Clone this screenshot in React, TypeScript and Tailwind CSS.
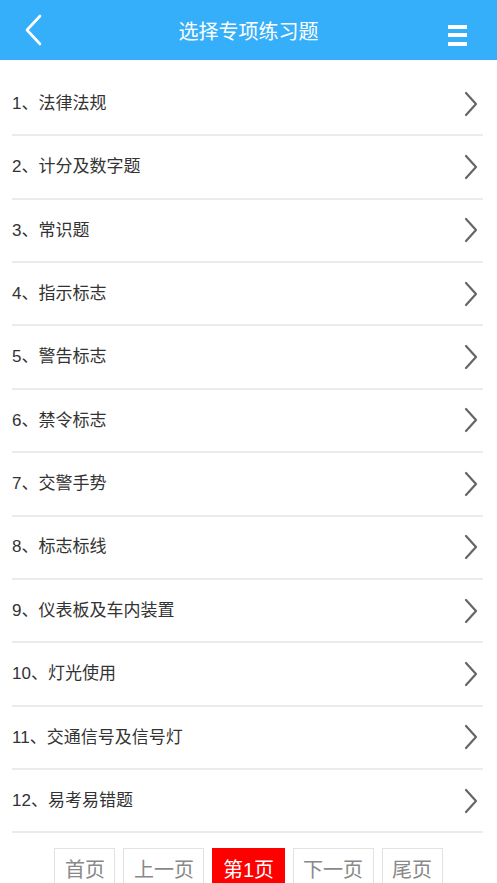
const items = [
  "1、法律法规",
  "2、计分及数字题",
  "3、常识题",
  "4、指示标志",
  "5、警告标志",
  "6、禁令标志",
  "7、交警手势",
  "8、标志标线",
  "9、仪表板及车内装置",
  "10、灯光使用",
  "11、交通信号及信号灯",
  "12、易考易错题",
];

const pages = ["首页", "上一页", "第1页", "下一页", "尾页"];

function Chevron() {
  return (
    <svg width="16" height="26" viewBox="0 0 16 26" fill="none">
      <path d="M3 2 L13 13 L3 24" stroke="#666" strokeWidth="2.2" strokeLinecap="round" strokeLinejoin="round" />
    </svg>
  );
}

export default function App() {
  return (
    <div
      className="w-[497px] h-[883px] overflow-hidden bg-white"
      style={{ fontFamily: '"Liberation Sans", "Noto Sans CJK SC", sans-serif' }}
    >
      {/* Header */}
      <div className="h-[60px] bg-[#36affb] flex items-center justify-between px-[24px] relative">
        <svg width="20" height="32" viewBox="0 0 20 32" fill="none">
          <path d="M16 2 L3 16 L16 30" stroke="#fff" strokeWidth="2.6" strokeLinecap="round" strokeLinejoin="round" />
        </svg>
        <div className="absolute inset-0 pt-[3px] flex items-center justify-center text-white text-[20px]">
          选择专项练习题
        </div>
        <div className="flex flex-col gap-[4.5px] mr-[6px] mt-[10px]">
          <div className="w-[19px] h-[4px] bg-white" />
          <div className="w-[19px] h-[4px] bg-white" />
          <div className="w-[19px] h-[4px] bg-white" />
        </div>
      </div>

      {/* List */}
      <div className="mt-[13px] mx-[12px] mr-[14px]">
        {items.map((t) => (
          <div
            key={t}
            className="h-[63.36px] border-b-2 border-[#ebebeb] flex items-center justify-between"
          >
            <span className="text-[17px] text-[#333]">{t}</span>
            <span className="mr-[4px]">
              <Chevron />
            </span>
          </div>
        ))}
      </div>

      {/* Pagination */}
      <div className="mt-[15px] flex justify-center gap-[8px]">
        {pages.map((p) =>
          p === "第1页" ? (
            <div key={p} className="h-[42px] px-[9.5px] pt-[6px] bg-[#ff0000] text-white text-[20px] border border-[#ff0000]">
              {p}
            </div>
          ) : (
            <div key={p} className="h-[42px] px-[9.5px] pt-[6px] text-[#888] text-[20px] border border-[#e2e2e2]">
              {p}
            </div>
          )
        )}
      </div>
    </div>
  );
}
